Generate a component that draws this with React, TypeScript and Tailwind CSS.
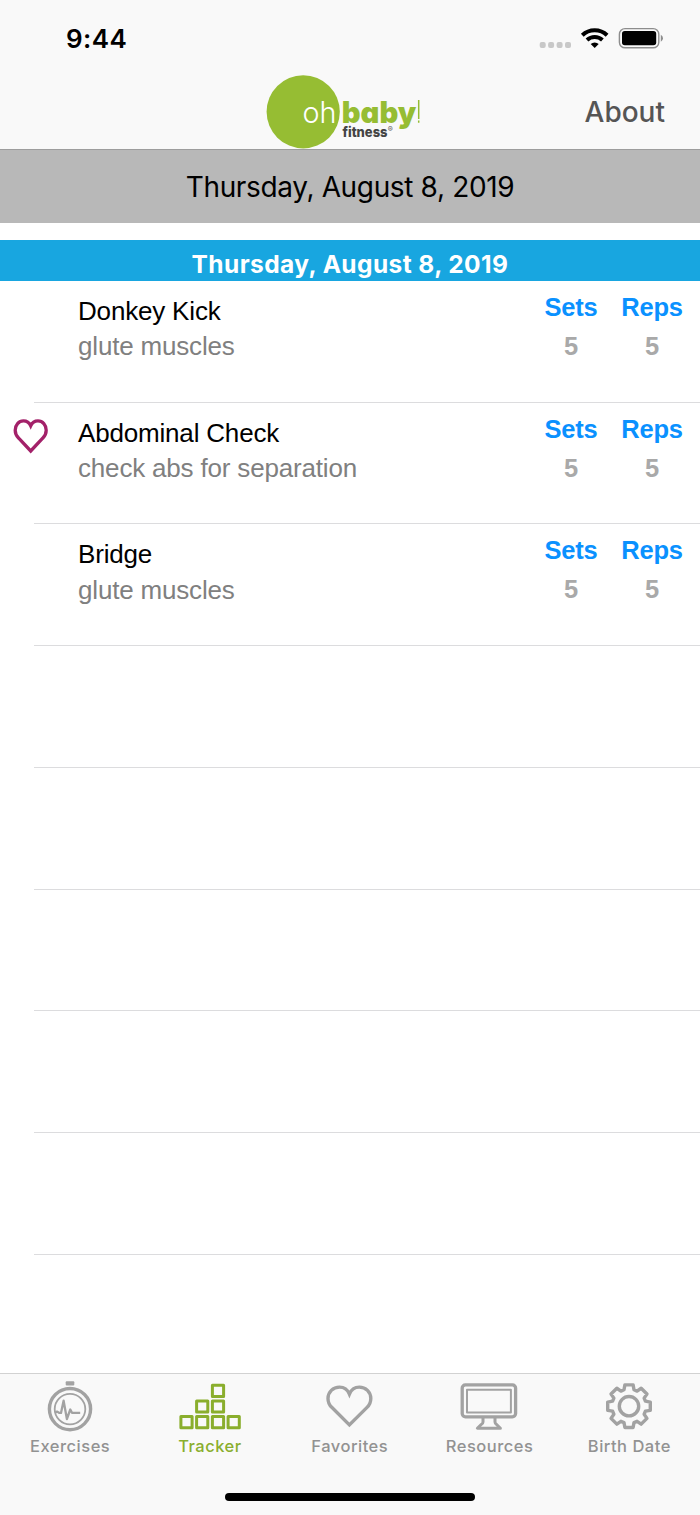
import type { ReactNode } from 'react';

const TOOTH = [[-5, -16.4], [-4.1, -21.3], [4.1, -21.3], [5, -16.4]];

const gearPath =
  Array.from({ length: 8 }, (_, i) => {
    const a = (i * Math.PI) / 4;
    return TOOTH.map(([x, y]) => {
      const px = x * Math.cos(a) - y * Math.sin(a);
      const py = x * Math.sin(a) + y * Math.cos(a);
      return `${px.toFixed(2)} ${py.toFixed(2)}`;
    }).join('L');
  })
    .map((seg, i) => (i === 0 ? 'M' : 'L') + seg)
    .join('') + 'Z';

function StatusBar() {
  return (
    <div className="flex h-[76px] items-start justify-between pl-[66px] pr-[36px]">
      <div className="mt-[23px] font-['Inter'] text-[26px] font-semibold leading-8 tracking-[0.4px]">9:44</div>
      <svg className="mt-[22px]" width="126" height="32" viewBox="538 22 126 32">
        <g fill="#c8c8c8">
          <rect x="539.7" y="42" width="6" height="6" rx="2" />
          <rect x="548.1" y="42" width="6" height="6" rx="2" />
          <rect x="556.6" y="42" width="6" height="6" rx="2" />
          <rect x="565" y="42" width="6" height="6" rx="2" />
        </g>
        <g fill="none" stroke="#000" strokeWidth="4">
          <path d="M582.3 35.2a18 18 0 0 1 24.8 0" />
          <path d="M587 40a11.4 11.4 0 0 1 15.4 0" />
        </g>
        <path d="M594.7 48l-4-4a5.8 5.8 0 0 1 8 0z" />
        <rect x="619.4" y="28.6" width="39.4" height="19.2" rx="5.6" fill="none" stroke="#8d8d8d" strokeWidth="1.4" />
        <rect x="622" y="31" width="34.2" height="14.3" rx="2.8" />
        <path d="M660.8 34.8q2.2 1.2 2.2 3.5t-2.2 3.5z" fill="#8d8d8d" />
      </svg>
    </div>
  );
}

function Logo() {
  return (
    <svg className="font-['Inter'] [font-feature-settings:'cv11'_1]" width="158" height="74" viewBox="265 75 158 74">
      <circle cx="303.2" cy="111.8" r="36.6" fill="#96bd33" />
      <text x="302.5" y="122.7" fontWeight="300" fontSize="29.5" textLength="34" lengthAdjust="spacingAndGlyphs" fill="#fff">oh</text>
      <text x="341.8" y="122.7" fontWeight="900" fontSize="29.5" textLength="74.5" lengthAdjust="spacingAndGlyphs" fill="#96bd33">baby</text>
      <path d="M418.7 100v19M418.7 120.6v2.2" stroke="#96bd33" strokeWidth="1.5" />
      <text x="342.5" y="136.8" fontWeight="800" fontSize="14" textLength="45" lengthAdjust="spacingAndGlyphs" fill="#444">fitness</text>
      <text x="387.8" y="132.3" fontSize="7.5" fill="#555">®</text>
    </svg>
  );
}

function Metric({ label, value }: { label: string; value: number }) {
  return (
    <div className="flex w-[81px] flex-col items-center text-[25.5px] font-bold leading-[30px]">
      <div className="tracking-[-0.2px] text-[#0a91ff]">{label}</div>
      <div className="mt-[9px] text-[#a9a9a9]">{value}</div>
    </div>
  );
}

type Exercise = { name: string; detail: string; favorite?: boolean };

const exercises: Exercise[] = [
  { name: 'Donkey Kick', detail: 'glute muscles' },
  { name: 'Abdominal Check', detail: 'check abs for separation', favorite: true },
  { name: 'Bridge', detail: 'glute muscles' },
];

function Row({ item }: { item?: Exercise }) {
  return (
    <div className="flex h-[121.72px] shrink-0">
      <div className="w-[34px] shrink-0" />
      <div className="relative flex flex-1 border-b border-[#dcdcde]">
        {item?.favorite && (
          <svg className="absolute -left-[22px] top-[14px]" width="37" height="38" viewBox="0 0 37 38" fill="none" stroke="#a32169" strokeWidth="3.3">
            <path d="M18.7 8.7C17.2 5.4 14.5 3.9 11.4 3.9 6.8 3.9 3.2 8 3.2 13.2 3.2 16.6 4.7 19.3 6.7 21.2L18.7 34 30.7 21.2C32.7 19.3 34.2 16.6 34.2 13.2 34.2 8 30.6 3.9 26 3.9 22.9 3.9 20.2 5.4 18.7 8.7Z" />
          </svg>
        )}
        {item && (
          <>
            <div className="flex-1 pl-[44px] pt-[13.8px] text-[26px] leading-[32px] tracking-[-0.18px]">
              <div className="text-black">{item.name}</div>
              <div className="mt-[3.4px] text-[#808080]">{item.detail}</div>
            </div>
            <div className="flex pr-[7.5px] pt-[10.8px]">
              <Metric label="Sets" value={5} />
              <Metric label="Reps" value={5} />
            </div>
          </>
        )}
      </div>
    </div>
  );
}

const Tab = ({ label, active, icon }: { label: string; active?: boolean; icon: ReactNode }) => (
  <div className={`flex w-[139.8px] flex-col items-center ${active ? 'text-[#8aae2d]' : 'text-[#929292]'}`}>
    <svg className="overflow-visible" width="64" height="56" viewBox="-32 -32 64 56" fill="none" stroke={active ? '#8aae2d' : '#a2a2a2'} strokeWidth="3.4" strokeLinejoin="round">
      {icon}
    </svg>
    <div className="mt-[6px] pl-[0.5px] font-['Inter'] text-[16.5px] font-[450] leading-5 tracking-[0.5px]">{label}</div>
  </div>
);

const stopwatch = (
  <>
    <circle cy="3.1" r="20.6" />
    <circle cy="3.1" r="15.3" strokeWidth="1.8" />
    <rect x="-4.3" y="-24.7" width="8.6" height="4.3" rx="1" fill="#a2a2a2" stroke="none" />
    <path d="M-15 6.7l2-1.1 2.4 1.3h1.6L-6.4-5.3-3.1 13 .3 3.5l1.7 3.3h8.2" strokeWidth="2.3" />
  </>
);

const blocks = (
  <g strokeWidth="3">
    {[[-29.1, 10.6], [-13.4, 10.6], [2.4, 10.6], [18.1, 10.6], [-13.4, -5.1], [2.4, -5.1], [2.4, -20.8]].map(([x, y]) => (
      <rect key={`${x},${y}`} x={x} y={y} width="11.2" height="11.2" />
    ))}
  </g>
);

const heart = (
  <path transform="translate(.4 .3)" strokeLinejoin="miter" d="M0 -12.2C-1.8 -16.6-5.5 -19.2-9.9 -19.2-16.4 -19.2-21.4 -14.2-21.4 -7.9-21.4 -4.3-20 -1.2-17.4 1.3L0 18.6 17.4 1.3C20 -1.2 21.4 -4.3 21.4 -7.9 21.4 -14.2 16.4 -19.2 9.9 -19.2 5.5 -19.2 1.8 -16.6 0 -12.2Z" />
);

const monitor = (
  <g transform="translate(0 .3)">
    <rect x="-26.8" y="-21.4" width="53.4" height="31.9" rx="3.2" strokeWidth="3.3" />
    <rect x="-22" y="-16.6" width="43.9" height="22.7" strokeWidth="2" />
    <path d="M-6 11v4.6q0 1.6-1.8 2.6L-11.6 22H11.4L7.6 18.2Q6 17 6 15.6V11" strokeWidth="3" />
  </g>
);

const gear = (
  <g transform="translate(0 .2)">
    <path d={gearPath} />
    <circle r="9.7" />
  </g>
);

export default function App() {
  return (
    <div className="flex h-[1515px] w-[700px] flex-col overflow-hidden bg-white font-['Liberation_Sans',sans-serif] text-black">
      <header className="h-[150px] shrink-0 border-b border-[#9d9d9d] bg-[#f9f9f9]">
        <StatusBar />
        <div className="flex h-[73px] items-center justify-between pl-[265px] pr-[35px]">
          <div className="-mt-[2px] h-[74px]"><Logo /></div>
          <div className="-mt-[2px] font-['Inter'] text-[28px] font-medium leading-8 text-[#555]">About</div>
        </div>
      </header>
      <div className="flex h-[73px] shrink-0 items-center justify-center bg-[#b8b8b8] font-['Inter'] text-[28px] tracking-[-0.35px]">Thursday, August 8, 2019</div>
      <main className="flex min-h-0 flex-1 flex-col overflow-hidden pt-[17px]">
        <div className="flex h-[41px] shrink-0 items-center justify-center bg-[#18a6e0] pt-[7px] font-['Inter'] text-[24.5px] font-bold tracking-[0.42px] text-white">Thursday, August 8, 2019</div>
        {exercises.map((item) => <Row key={item.name} item={item} />)}
        {[0, 1, 2, 3, 4, 5].map((i) => <Row key={i} />)}
      </main>
      <nav className="flex h-[142px] shrink-0 flex-col border-t border-[#d2d2d2] bg-[#f9f9f9]">
        <div className="flex h-[119px]">
          <Tab label="Exercises" icon={stopwatch} />
          <Tab label="Tracker" active icon={blocks} />
          <Tab label="Favorites" icon={heart} />
          <Tab label="Resources" icon={monitor} />
          <Tab label="Birth Date" icon={gear} />
        </div>
        <div className="mx-auto h-[8px] w-[250px] rounded-full bg-black" />
      </nav>
    </div>
  );
}
